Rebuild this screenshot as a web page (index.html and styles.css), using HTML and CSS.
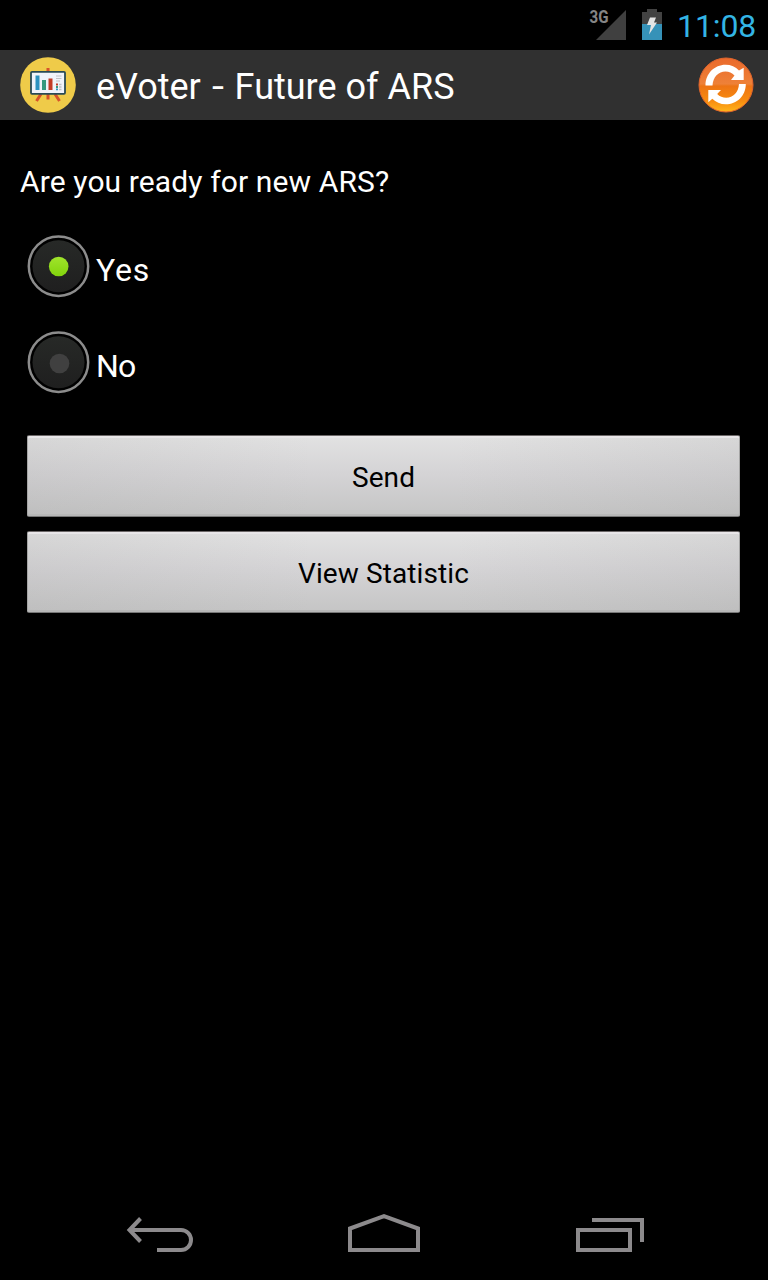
FILE: index.html
```html
<!DOCTYPE html>
<html lang="en">
<head>
<meta charset="utf-8">
<title>eVoter - Future of ARS</title>
<link rel="stylesheet" href="styles.css">
</head>
<body>
<div class="screen">
  <header class="status-bar">
    <svg class="signal" width="46" height="50" viewBox="580 0 46 50">
      <path d="M626 10V40H596Z" fill="#404040"/>
      <text class="network" x="589.5" y="23" textLength="19" lengthAdjust="spacingAndGlyphs">3G</text>
    </svg>
    <svg class="battery" width="20" height="32" viewBox="642 9 20 32">
      <path d="M647 9h10v3h5v12h-20v-12h5z" fill="#424242"/>
      <path d="M642 24h20v16h-20z" fill="#3692b8"/>
      <path d="M650 17.500h6l-2 5h3l-8 12 2-9.500h-4z" fill="#e4e4e4"/>
    </svg>
    <span class="clock">11:08</span>
  </header>
  <div class="action-bar">
    <svg class="app-icon" width="56" height="56" viewBox="20 57 56 56">
      <circle cx="48" cy="85" r="27.800" fill="#efcb49"/>
      <path d="M48 68v3M48 94v5.500M41 94l-4.500 7M55 94l4.500 7" stroke="#d6532b" stroke-width="3" fill="none"/>
      <rect x="31" y="71.800" width="34" height="22" rx="1" fill="#f0f3fa" stroke="#294b56" stroke-width="1.800"/>
      <path d="M35.500 75.500h4v14.500h-4z" fill="#2c92c0"/>
      <path d="M42 80h4v10h-4z" fill="#35987f"/>
      <path d="M48.500 78.500h4v11.500h-4z" fill="#c23b27"/>
      <path d="M56 76h5.500M56 78.500h5.500M56 81h4" stroke="#bfc1c5" stroke-width="1.200"/>
      <path d="M56 83.500h2v2h-2z" fill="#c23b27"/>
      <path d="M56 86h2v2h-2z" fill="#35987f"/>
      <path d="M56 88.500h2v1.700h-2z" fill="#2c92c0"/>
      <path d="M59 84.500h2.500M59 87h2.500M59 89.500h2.500" stroke="#bfc1c5" stroke-width="1.400"/>
    </svg>
    <h1 class="title">eVoter <span class="dash">-</span> Future of ARS</h1>
    <svg class="refresh" width="56" height="56" viewBox="698 57 56 56">
      <defs>
        <linearGradient id="orange" x1="0" y1="0" x2="0" y2="1">
          <stop offset="0" stop-color="#ea6a2c"/>
          <stop offset=".48" stop-color="#ee8138"/>
          <stop offset=".52" stop-color="#ed7414"/>
          <stop offset=".8" stop-color="#f88d10"/>
          <stop offset="1" stop-color="#ffb61c"/>
        </linearGradient>
      </defs>
      <circle cx="726" cy="85" r="27" fill="url(#orange)" stroke="#e0642c" stroke-width="1"/>
      <path d="M705.500 85.500C705.500 73.500 714.500 64.800 725.500 64.800c5.500 0 10 2 13.500 5.700L743.700 67.800V80H731l3.500-4.500c-2.500-2.500-5.500-4-9-4-7 0-12.500 5.500-13 14z" fill="#fff"/>
      <path d="M745.800 84c0 12-9 20.300-20 20.300-5.500 0-10-2-13.500-5.500L708.300 102.300V90H721l-3.800 4c2.500 2.500 5.500 3.800 9 3.800 7 0 12.300-5.500 12.800-13.800z" fill="#fff"/>
    </svg>
  </div>
  <main class="content">
    <p class="question">Are you ready for new ARS?</p>
    <svg width="0" height="0" class="defs">
      <defs>
        <linearGradient id="dial" x1="0" y1="0" x2="0" y2="1">
          <stop offset="0" stop-color="#272927"/>
          <stop offset="1" stop-color="#1f1f1f"/>
        </linearGradient>
        <linearGradient id="lit" x1="0" y1="0" x2="0" y2="1">
          <stop offset="0" stop-color="#a0e42c"/>
          <stop offset="1" stop-color="#82d40c"/>
        </linearGradient>
      </defs>
    </svg>
    <div class="option">
      <svg class="radio" width="64" height="64" viewBox="0 0 64 64">
        <circle cx="31.500" cy="32.200" r="29.700" fill="#000" stroke="#8c8c8c" stroke-width="2.500"/>
        <circle cx="31.500" cy="32.200" r="26" fill="url(#dial)"/>
        <circle cx="31.700" cy="32.500" r="9.800" fill="url(#lit)"/>
      </svg>
      <span class="label yes">Yes</span>
    </div>
    <div class="option">
      <svg class="radio" width="64" height="64" viewBox="0 0 64 64">
        <circle cx="31.500" cy="32.200" r="29.700" fill="#000" stroke="#8c8c8c" stroke-width="2.500"/>
        <circle cx="31.500" cy="32.200" r="26" fill="url(#dial)"/>
        <circle cx="32.500" cy="33.500" r="9.800" fill="#404040"/>
      </svg>
      <span class="label no">No</span>
    </div>
    <div class="actions">
      <button class="btn send">Send</button>
      <button class="btn stats">View Statistic</button>
    </div>
  </main>
  <nav class="nav-bar">
    <svg width="68" height="40" viewBox="125 1214 68 40"><path d="M129 1230H181a10 10 0 0 1 0 20H157M140.500 1218.500L129.500 1230l11 11.500" fill="none" stroke="#8c8a8c" stroke-width="4"/></svg>
    <svg width="74" height="40" viewBox="347 1214 74 40"><path d="M350 1250V1228.500L384 1216.200l34 12.300V1250Z" fill="none" stroke="#8c8a8c" stroke-width="4"/></svg>
    <svg width="70" height="40" viewBox="575 1214 70 40"><path d="M578 1230H630v20H578ZM592 1220H642v22" fill="none" stroke="#8c8a8c" stroke-width="4"/></svg>
  </nav>
</div>
</body>
</html>
```
FILE: styles.css
```css
* { box-sizing: border-box; }
body { margin: 0; background: #000; color: #fff; font-family: Roboto, "Liberation Sans", sans-serif; }
svg { display: block; flex: none; }
.screen { width: 768px; height: 1280px; display: flex; flex-direction: column; overflow: hidden; }
.status-bar { height: 50px; display: flex; align-items: center; justify-content: flex-end; padding-right: 12px; }
.network { font: bold 18px Roboto, sans-serif; fill: #858585; }
.battery { margin-left: 16px; }
.clock { width: 79px; margin-left: 15px; padding-top: 2px; font-size: 32px; line-height: 38px; letter-spacing: -.1px; color: #33b5e5; white-space: nowrap; }
.action-bar { height: 70px; background: #303030; display: flex; align-items: center; padding: 0 14px 0 20px; }
.title { flex: 1; margin: 0; padding: 3px 0 0 20px; font-size: 36px; line-height: 42px; font-weight: 400; white-space: nowrap; }
.dash { display: inline-block; margin: 0 3px; transform: scaleX(1.2); }
.content { flex: 1; padding: 43px 27px 0; }
.question { margin: 0 0 17px -7px; font-size: 30px; line-height: 38px; letter-spacing: .12px; white-space: nowrap; }
.defs { height: 0; }
.option { height: 96px; display: flex; align-items: center; }
.label { padding: 7px 0 0 5px; font-size: 32px; line-height: 38px; }
.yes { letter-spacing: .8px; }
.no { letter-spacing: -.8px; }
.actions { display: flex; flex-direction: column; gap: 14px; padding-top: 25px; }
.btn { height: 82px; width: 713px; padding: 3px 0 0; border: 1px solid #a5a5a5; border-top-color: #6c6868; border-bottom-color: #777; border-radius: 2px; box-shadow: inset 0 2px 0 #e8e6e8, inset 0 -2px 0 #b8b8b8; color: #000; font: 28px Roboto, sans-serif; letter-spacing: .1px; background: linear-gradient(90deg, rgba(150,150,150,.14), rgba(150,150,150,0) 40%, rgba(150,150,150,0) 60%, rgba(150,150,150,.14)), linear-gradient(#e2e2e2, #d5d4d6 45%, #c5c5c5); }
.nav-bar { height: 96px; display: flex; justify-content: space-between; align-items: center; padding: 4px 123px 0 125px; }
```
